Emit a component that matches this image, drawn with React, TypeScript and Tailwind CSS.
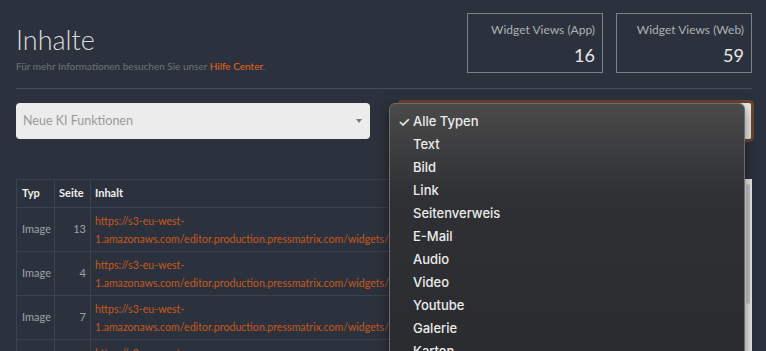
import React from 'react'

const types = ['Text', 'Bild', 'Link', 'Seitenverweis', 'E-Mail', 'Audio', 'Video', 'Youtube', 'Galerie', 'Karten']

const rows = [
    { typ: 'Image', seite: 13 },
    { typ: 'Image', seite: 4 },
    { typ: 'Image', seite: 7 },
    { typ: 'Image', seite: 2 },
]

const StatBox = ({ label, value }: { label: string; value: number }) => (
    <div className="w-[136px] h-[60px] border border-[#7b7f86] px-[7px] pt-[8px] flex flex-col items-end">
        <div className="text-[12px] leading-[16px] text-[#aeb1b6]">{label}</div>
        <div className="text-[18px] leading-[22px] mt-[6px] text-[#e6e6e6]">{value}</div>
    </div>
)

const App = () => {
    return (
        <div className="w-[766px] h-[351px] overflow-hidden bg-[#2c323d] relative" style={{ fontFamily: 'Lato, "Open Sans", sans-serif' }}>
            <div className="pl-[16px] pr-[14px]">
                <div className="flex justify-between pt-[13px]">
                    <div className="pt-[12px]">
                        <h1 className="text-[27px] leading-[30px] font-light text-[#dcdcdc]">Inhalte</h1>
                        <p className="text-[10px] leading-[12px] mt-[5px] text-[#6d737c]">
                            Für mehr Informationen besuchen Sie unser{' '}
                            <span className="text-[#e6651a]">Hilfe Center</span>.
                        </p>
                    </div>
                    <div className="flex gap-[13px]">
                        <StatBox label="Widget Views (App)" value={16} />
                        <StatBox label="Widget Views (Web)" value={59} />
                    </div>
                </div>
                <div className="h-px bg-[#474d57] mt-[15px]" />

                <div className="flex justify-between mt-[11px] items-center">
                    <div className="w-[354px] h-[36px] bg-[#ececec] rounded-[4px] flex items-center justify-between pl-[7px] pr-[8px]">
                        <span className="text-[12.5px] text-[#9a9a9a]">Neue KI Funktionen</span>
                        <span className="w-0 h-0 border-l-[3px] border-r-[3px] border-t-[4px] border-l-transparent border-r-transparent border-t-[#777]" />
                    </div>
                    <div className="w-[357px] h-[42px] rounded-[5px] border-[3px] border-[#6e4630] bg-[#ededed] flex items-center justify-end pr-[6px] -mr-[2px]">
                        <svg width="8" height="6" viewBox="0 0 8 6"><path d="M1 1.5l3 3 3-3" stroke="#555" strokeWidth="1.3" fill="none" /></svg>
                    </div>
                </div>

                <div className="mt-[37px] flex">
                    <table className="border-collapse text-[11px] w-[729px] table-fixed">
                        <colgroup>
                            <col className="w-[38px]" />
                            <col className="w-[36px]" />
                            <col />
                        </colgroup>
                        <thead>
                            <tr className="h-[28px]">
                                <th className="border border-[#3c434e] text-left px-[5px] font-bold text-[#f0f0f0]">Typ</th>
                                <th className="border border-[#3c434e] text-left px-[4px] font-bold text-[#f0f0f0]">Seite</th>
                                <th className="border border-[#3c434e] text-left px-[4px] font-bold text-[#f0f0f0]">Inhalt</th>
                            </tr>
                        </thead>
                        <tbody>
                            {rows.map((r, i) => (
                                <tr key={i} className="h-[44px]">
                                    <td className="border border-[#3c434e] px-[5px] text-[#9ea2a8]">{r.typ}</td>
                                    <td className="border border-[#3c434e] px-[4px] text-right text-[#9ea2a8]">{r.seite}</td>
                                    <td className="border border-[#3c434e] px-[4px] text-[10.6px] text-[#c7581c] leading-[18px] whitespace-nowrap overflow-hidden">
                                        https://s3-eu-west-
                                        <br />
                                        1.amazonaws.com/editor.production.pressmatrix.com/widgets/a8f2c41e/image.jpg
                                    </td>
                                </tr>
                            ))}
                        </tbody>
                    </table>
                    <div className="w-[7px] bg-[#ededed] pt-[5px] px-[1px] self-start h-[200px]">
                        <div className="h-[120px] w-[4px] bg-[#c9c9c9] rounded-[2px]" />
                    </div>
                </div>
            </div>

            <div
                className="absolute left-[389px] top-[103px] w-[356px] h-[270px] rounded-[6px] border border-[#6c6c6c] pt-[6px] shadow-[0_4px_14px_rgba(0,0,0,0.5)]"
                style={{ background: 'linear-gradient(180deg,#4a4a4a 0%,#2e3033 35%,#292b2e 100%)', fontFamily: 'Inter, "Liberation Sans", sans-serif' }}
            >
                <div className="flex items-center h-[23px] text-[13px] font-medium text-[#ececec]">
                    <span className="w-[23px] pl-[8px] text-[14px]">✓</span>
                    <span>Alle Typen</span>
                </div>
                {types.map(t => (
                    <div key={t} className="flex items-center h-[23px] text-[13px] font-medium text-[#ececec] pl-[23px]">
                        {t}
                    </div>
                ))}
            </div>
        </div>
    )
}

export default App
